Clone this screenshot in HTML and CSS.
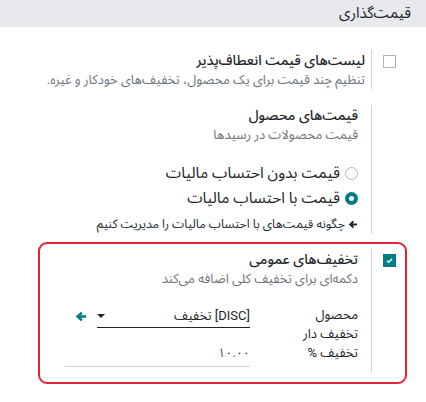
FILE: index.html
```html
<!DOCTYPE html>
<html lang="fa" dir="rtl">
<head>
<meta charset="utf-8">
<link rel="stylesheet" href="styles.css">
</head>
<body>
<div class="section-title">قیمت‌گذاری</div>
<div class="settings">
  <div class="setting first">
    <div class="left-pane"><span class="checkbox"></span></div>
    <div class="right-pane">
      <div class="label">لیست‌های قیمت انعطاف‌پذیر</div>
      <div class="help">تنظیم چند قیمت برای یک محصول، تخفیف‌های خودکار و غیره.</div>
    </div>
  </div>
  <div class="setting">
    <div class="left-pane"></div>
    <div class="right-pane">
      <div class="label">قیمت‌های محصول</div>
      <div class="help">قیمت محصولات در رسیدها</div>
      <div class="radios">
        <div class="radio-row"><span class="radio"></span><span>قیمت بدون احتساب مالیات</span></div>
        <div class="radio-row"><span class="radio on"></span><span>قیمت با احتساب مالیات</span></div>
      </div>
      <div class="link"><svg class="arr" viewBox="0 0 10 10" width="10" height="9"><path d="M9.5 5H2.5M5.5 1.5L1.8 5L5.5 8.5" stroke="#1b2a33" stroke-width="2.2" fill="none"/></svg><span>چگونه قیمت‌های با احتساب مالیات را مدیریت کنیم</span></div>
    </div>
  </div>
  <div class="setting highlighted">
    <div class="left-pane"><span class="checkbox checked"><svg viewBox="0 0 12 12" width="12" height="12"><path d="M3.2 6.2L5.2 8L8.8 4.2" stroke="#fff" stroke-width="1.6" fill="none"/></svg></span></div>
    <div class="right-pane">
      <div class="label">تخفیف‌های عمومی</div>
      <div class="help">دکمه‌ای برای تخفیف کلی اضافه می‌کند</div>
      <div class="fields">
        <div class="field-labels">
          <div>محصول</div>
          <div>تخفیف دار</div>
          <div>تخفیف %</div>
        </div>
        <div class="field-values">
          <div class="many2one">
            <div class="input"><span>[DISC] تخفیف</span><span class="caret"></span></div>
            <svg class="ext" viewBox="0 0 12 12" width="12" height="11"><path d="M11.6 6H3M7 1.8L2.2 6L7 10.2" stroke="#017e84" stroke-width="2.8" fill="none"/></svg>
          </div>
          <div class="num">۱۰.۰۰</div>
        </div>
      </div>
    </div>
  </div>
</div>
</body>
</html>
```
FILE: styles.css
```css
html, body {
  margin: 0;
  padding: 0;
  background: #fff;
}
body {
  direction: rtl;
  font-family: Roboto, "Noto Sans Arabic", sans-serif;
  font-size: 13px;
  color: #212529;
  width: 426px;
}
.section-title {
  background: #e7e9ed;
  height: 27px;
  line-height: 27px;
  padding-right: 15px;
  font-size: 15px;
  color: #212529;
}
.settings {
  padding: 23px 0 20px 0;
  display: flex;
  flex-direction: column;
  gap: 16px;
}
.setting {
  display: flex;
  position: relative;
}
.left-pane {
  width: 24px;
  padding-right: 30px;
  flex: none;
}
.right-pane {
  border-right: 1px solid #ced4da;
  padding-right: 13px;
  flex: 1;
  margin-left: 16px;
}
.setting.first .right-pane {
  padding-right: 6px;
}
.label {
  font-weight: 500;
  font-size: 14px;
  line-height: 20px;
}
.help {
  color: #6c757d;
  line-height: 19px;
}
.checkbox {
  display: block;
  width: 11px;
  height: 11px;
  border: 1px solid #adb5bd;
  margin-top: 5px;
  box-sizing: content-box;
}
.checkbox.checked {
  background: #017e84;
  border-color: #017e84;
  display: flex;
  align-items: center;
  justify-content: center;
}
.checkbox.checked svg { width: 11px; height: 11px; }
.radios {
  margin-top: 20px;
  display: flex;
  flex-direction: column;
  gap: 6px;
  font-size: 15.5px;
}
.radio-row {
  display: flex;
  align-items: center;
  gap: 5px;
  line-height: 19px;
}
.radio {
  width: 11px;
  height: 11px;
  border: 1px solid #adb5bd;
  border-radius: 50%;
  flex: none;
}
.radio.on {
  border: 4px solid #017e84;
  width: 5px;
  height: 5px;
}
.link {
  margin-top: 7px;
  display: flex;
  align-items: center;
  gap: 3px;
  line-height: 19px;
  font-size: 12.3px;
  color: #1b2a33;
}
.highlighted {
  margin-top: -1px;
}
.highlighted .right-pane {
  padding-bottom: 6px;
}
.highlighted::before {
  content: "";
  position: absolute;
  left: 38px;
  right: 19px;
  top: -7px;
  bottom: -11px;
  border: 2px solid #e0243a;
  border-radius: 9px;
}
.fields {
  margin-top: 17px;
  display: flex;
}
.field-labels {
  width: 108px;
  line-height: 19px;
}
.field-values {
  flex: none;
  width: 185px;
}
.many2one {
  display: flex;
  align-items: center;
  gap: 10px;
}
.input {
  width: 153px;
  border-bottom: 1px solid #212529;
  display: flex;
  justify-content: space-between;
  align-items: center;
  height: 22px;
}
.caret {
  width: 0;
  height: 0;
  border-left: 4px solid transparent;
  border-right: 4px solid transparent;
  border-top: 4px solid #212529;
}
.num {
  margin-top: 16px;
  line-height: 18px;
  border-bottom: 1px solid #ced4da;
  padding-bottom: 4px;
  color: #495057;
  font-size: 12.5px;
}
```
